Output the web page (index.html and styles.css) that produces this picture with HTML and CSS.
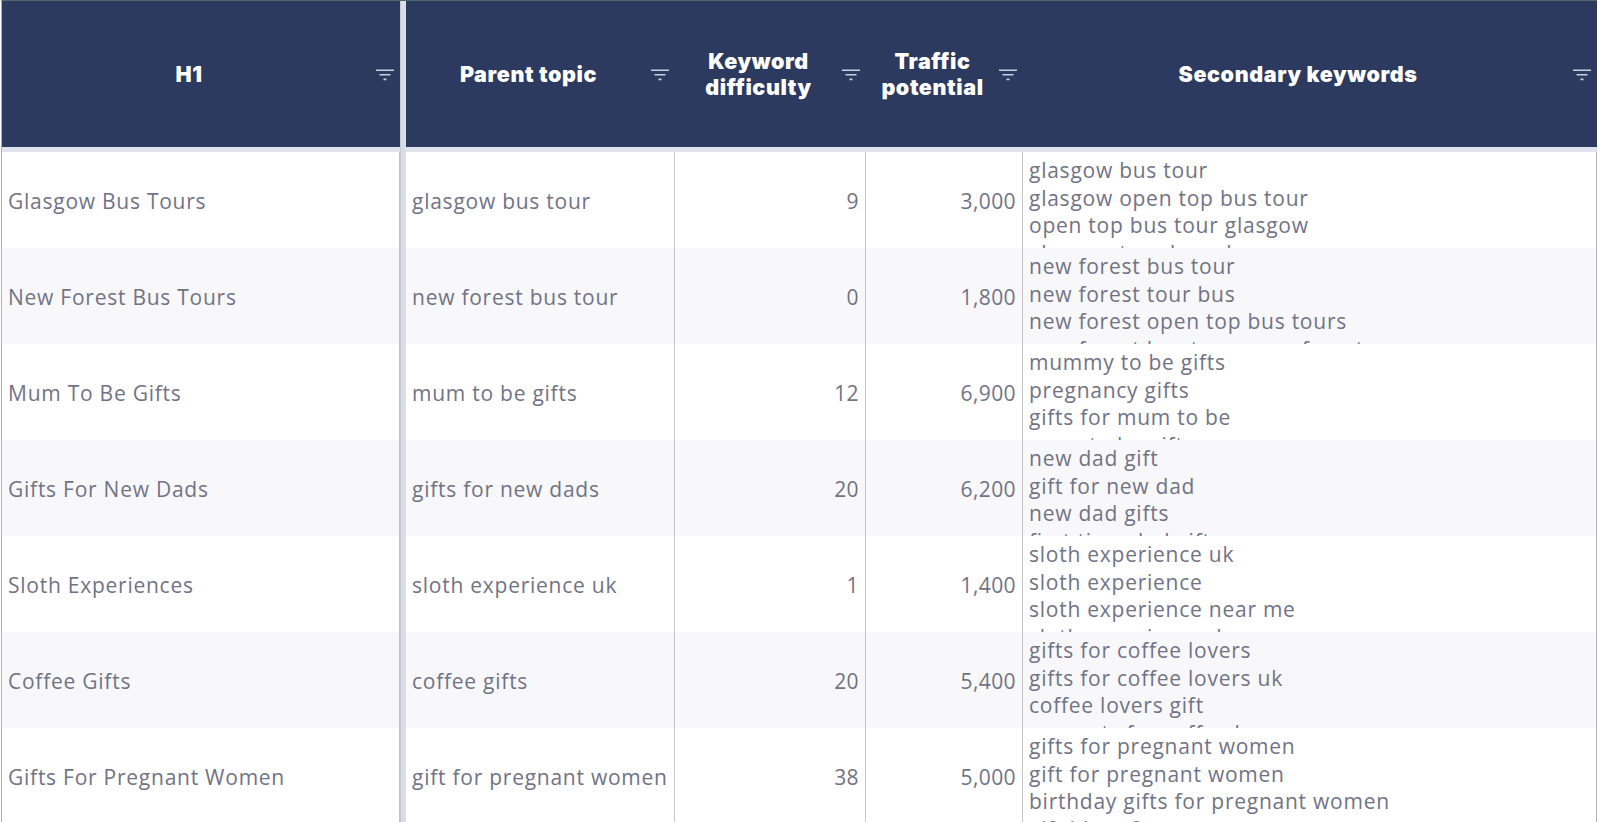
FILE: index.html
```html
<!DOCTYPE html>
<html>
<head>
<meta charset="utf-8">
<link rel="stylesheet" href="styles.css">
</head>
<body>
<div class="sheet">
  <div class="hcell h-first"><span class="hlabel">H1</span><svg class="filter" viewBox="0 0 18 12"><path d="M0 1.2H18M3.5 5.8H14.5M7.5 10.4H10.5"/></svg></div>
  <div class="sep"></div>
  <div class="hcell"><span class="hlabel">Parent topic</span><svg class="filter" viewBox="0 0 18 12"><path d="M0 1.2H18M3.5 5.8H14.5M7.5 10.4H10.5"/></svg></div>
  <div class="hcell"><span class="hlabel">Keyword<br>difficulty</span><svg class="filter" viewBox="0 0 18 12"><path d="M0 1.2H18M3.5 5.8H14.5M7.5 10.4H10.5"/></svg></div>
  <div class="hcell"><span class="hlabel">Traffic<br>potential</span><svg class="filter" viewBox="0 0 18 12"><path d="M0 1.2H18M3.5 5.8H14.5M7.5 10.4H10.5"/></svg></div>
  <div class="hcell h-last"><span class="hlabel">Secondary keywords</span><svg class="filter" viewBox="0 0 18 12"><path d="M0 1.2H18M3.5 5.8H14.5M7.5 10.4H10.5"/></svg></div>

  <div class="strip s-first"></div>
  <div class="strip s-rest"></div>

  <div class="cell c-first">Glasgow Bus Tours</div>
  <div class="cell">glasgow bus tour</div>
  <div class="cell num">9</div>
  <div class="cell num">3,000</div>
  <div class="cell multi">glasgow bus tour<br>glasgow open top bus tour<br>open top bus tour glasgow<br>glasgow tour bus glasgow</div>

  <div class="cell c-first alt">New Forest Bus Tours</div>
  <div class="cell alt">new forest bus tour</div>
  <div class="cell num alt">0</div>
  <div class="cell num alt">1,800</div>
  <div class="cell multi alt">new forest bus tour<br>new forest tour bus<br>new forest open top bus tours<br>new forest bus tours new forest</div>

  <div class="cell c-first">Mum To Be Gifts</div>
  <div class="cell">mum to be gifts</div>
  <div class="cell num">12</div>
  <div class="cell num">6,900</div>
  <div class="cell multi">mummy to be gifts<br>pregnancy gifts<br>gifts for mum to be<br>mum to be gifts</div>

  <div class="cell c-first alt">Gifts For New Dads</div>
  <div class="cell alt">gifts for new dads</div>
  <div class="cell num alt">20</div>
  <div class="cell num alt">6,200</div>
  <div class="cell multi alt">new dad gift<br>gift for new dad<br>new dad gifts<br>first time dad gifts</div>

  <div class="cell c-first">Sloth Experiences</div>
  <div class="cell">sloth experience uk</div>
  <div class="cell num">1</div>
  <div class="cell num">1,400</div>
  <div class="cell multi">sloth experience uk<br>sloth experience<br>sloth experience near me<br>sloth experience day</div>

  <div class="cell c-first alt">Coffee Gifts</div>
  <div class="cell alt">coffee gifts</div>
  <div class="cell num alt">20</div>
  <div class="cell num alt">5,400</div>
  <div class="cell multi alt">gifts for coffee lovers<br>gifts for coffee lovers uk<br>coffee lovers gift<br>presents for coffee lovers</div>

  <div class="cell c-first">Gifts For Pregnant Women</div>
  <div class="cell">gift for pregnant women</div>
  <div class="cell num">38</div>
  <div class="cell num">5,000</div>
  <div class="cell multi">gifts for pregnant women<br>gift for pregnant women<br>birthday gifts for pregnant women<br>gift ideas for pregnant women</div>
</div>
</body>
</html>
```

FILE: styles.css
```css
html, body {
  margin: 0;
  padding: 0;
  background: #ffffff;
  height: 822px;
  overflow: hidden;
}

.sheet {
  display: grid;
  grid-template-columns: 398px 6px 269px 191px 157px 574px;
  grid-template-rows: 146px 5px repeat(7, 96px);
  margin-left: 1px;
  border-left: 1px solid #a7b8ad;
  border-top: 1px solid #4f6a6a;
  width: 1595px;
  font-family: "Open Sans", "Noto Sans", sans-serif;
}

.hcell {
  background: #2b3a5e;
  color: #ffffff;
  display: flex;
  align-items: center;
  padding-right: 6px;
  font-family: Inter, "Noto Sans", sans-serif;
  font-weight: 900;
  font-size: 21.5px;
  line-height: 26px;
  letter-spacing: 0.6px;
}

.hlabel {
  flex: 1;
  text-align: center;
}

.filter {
  width: 18px;
  height: 12px;
  flex: none;
  margin-top: 1px;
}

.filter path {
  stroke: #c8d0e0;
  stroke-width: 1.6;
  fill: none;
}

.sep {
  grid-column: 2;
  grid-row: 1 / span 9;
  background: #d9dde5;
  border-left: 1px solid #c6c9d1;
}

.strip {
  background: #dfe2ea;
}

.s-first {
  grid-column: 1;
}

.s-rest {
  grid-column: 3 / span 4;
}

.cell {
  color: #717385;
  font-size: 21px;
  letter-spacing: 0.75px;
  line-height: 27.5px;
  padding: 3px 6px 0;
  display: flex;
  align-items: center;
  white-space: nowrap;
  overflow: hidden;
  border-right: 1px solid #c4c5cb;
}

.c-first {
  padding-left: 6px;
  border-right: 1px solid #c0c3ca;
}

.num {
  justify-content: flex-end;
  letter-spacing: 0.4px;
}

.multi {
  display: block;
  padding-top: 5px;
  border-right: 1px solid #b0b2b8;
}

.alt {
  background: #f8f8fa;
}
```
